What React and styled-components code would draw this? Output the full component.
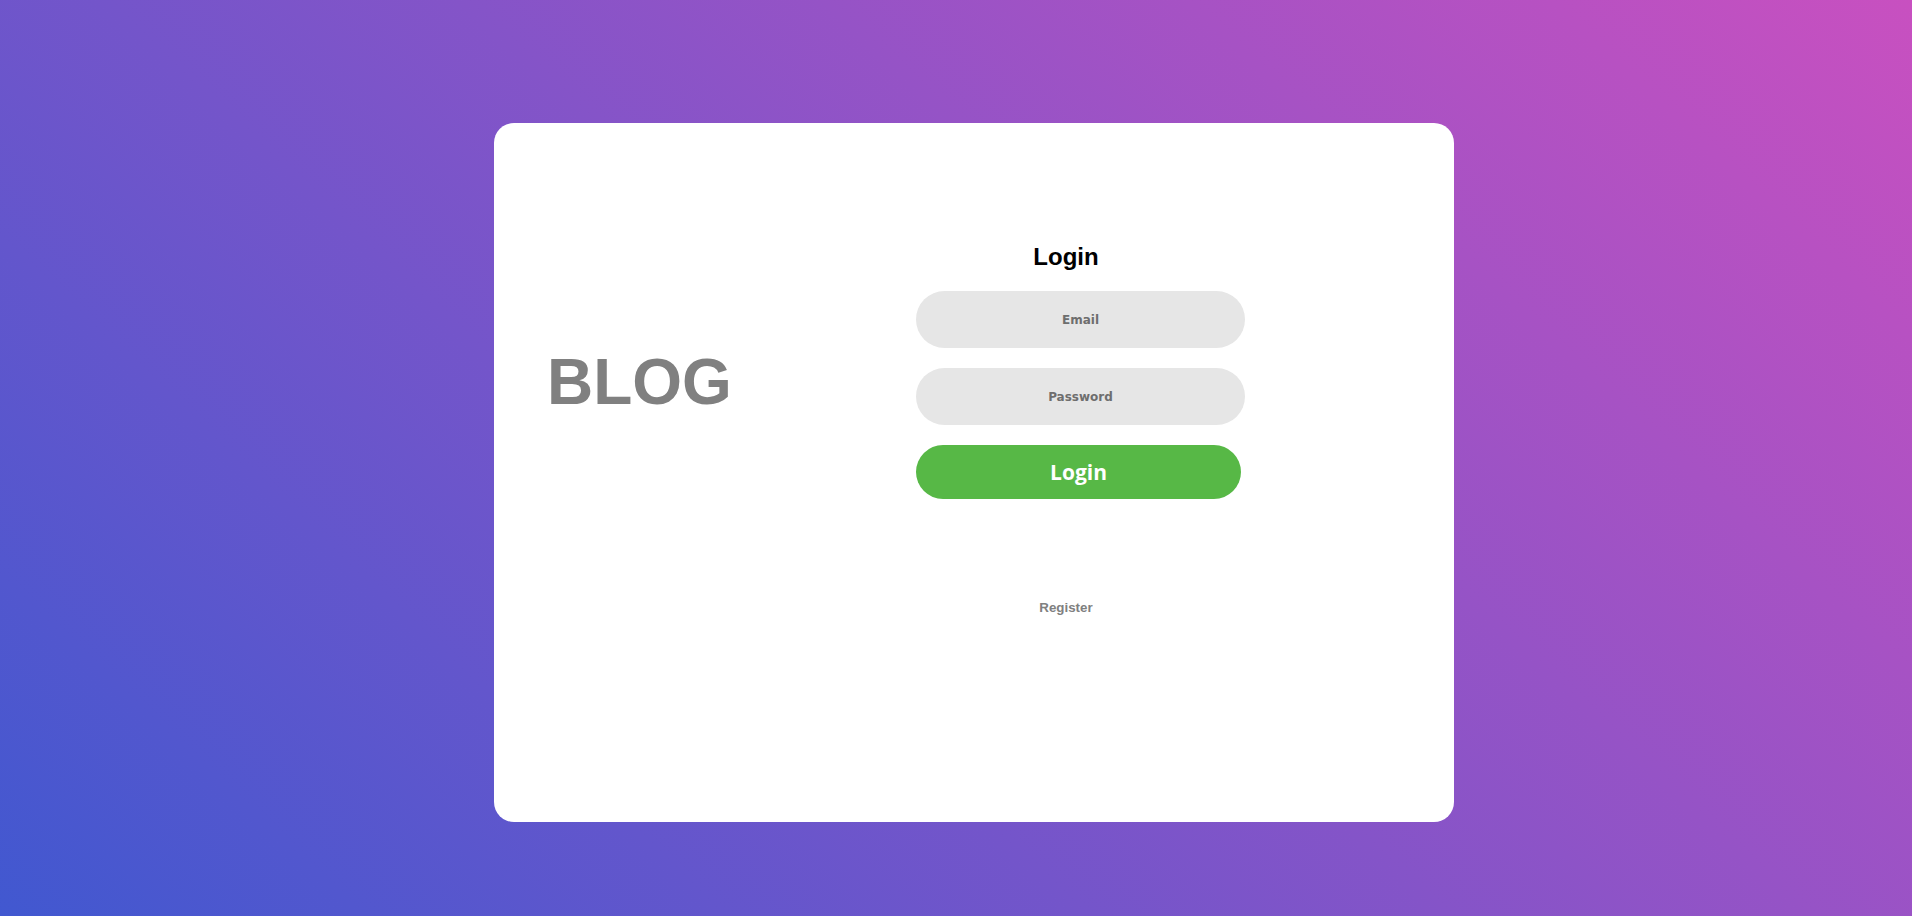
import React from "react";
import styled, { createGlobalStyle } from "styled-components";

const Global = createGlobalStyle`
  * { box-sizing: border-box; }
  html, body { margin: 0; padding: 0; }
  body { font-family: "Liberation Sans", Arial, sans-serif; }
`;

const Page = styled.div`
  min-height: 100vh;
  padding: 123px 0 0 494px;
  background: linear-gradient(43deg, #4158d0 0%, #c850c0 100%);
`;

const Card = styled.div`
  width: 960px;
  height: 699px;
  background: #ffffff;
  border-radius: 20px;
  display: flex;
  align-items: flex-start;
`;

const BrandColumn = styled.div`
  width: 422px;
  padding: 223px 0 0 53px;
`;

const Brand = styled.h1`
  margin: 0;
  font-family: "Liberation Sans", Arial, sans-serif;
  font-weight: 700;
  font-size: 64px;
  line-height: 73px;
  color: #808080;
`;

const FormColumn = styled.form`
  width: 300px;
  padding-top: 120px;
  display: flex;
  flex-direction: column;
  align-items: center;
`;

const Title = styled.h2`
  margin: 0 0 20px;
  font-family: "Liberation Sans", Arial, sans-serif;
  font-weight: 700;
  font-size: 24px;
  line-height: 28px;
  color: #000;
`;

const Field = styled.input`
  align-self: flex-start;
  width: 329px;
  height: 57px;
  margin: 0 0 20px;
  border: none;
  outline: none;
  border-radius: 29px;
  background: #e6e6e6;
  text-align: center;
  font-family: "DejaVu Sans", Verdana, sans-serif;
  font-weight: 700;
  font-size: 12px;
  color: #333;
  &::placeholder {
    color: #6e6e6e;
    opacity: 1;
  }
`;

const Submit = styled.button`
  align-self: flex-start;
  width: 325px;
  height: 54px;
  border: none;
  border-radius: 27px;
  background: #57b846;
  color: #ffffff;
  font-family: "Open Sans", sans-serif;
  font-weight: 700;
  font-size: 21px;
  cursor: pointer;
`;

const LinkButton = styled.button`
  margin-top: 101px;
  padding: 0;
  border: none;
  background: none;
  font-family: "Liberation Sans", Arial, sans-serif;
  font-weight: 700;
  font-size: 13.333px;
  line-height: 15px;
  color: #808080;
  cursor: pointer;
`;

export default function App() {
  return (
    <>
      <Global />
      <Page>
        <Card>
          <BrandColumn>
            <Brand>BLOG</Brand>
          </BrandColumn>
          <FormColumn onSubmit={(e) => e.preventDefault()}>
            <Title>Login</Title>
            <Field type="email" placeholder="Email" />
            <Field type="password" placeholder="Password" />
            <Submit type="submit">Login</Submit>
            <LinkButton type="button">Register</LinkButton>
          </FormColumn>
        </Card>
      </Page>
    </>
  );
}
